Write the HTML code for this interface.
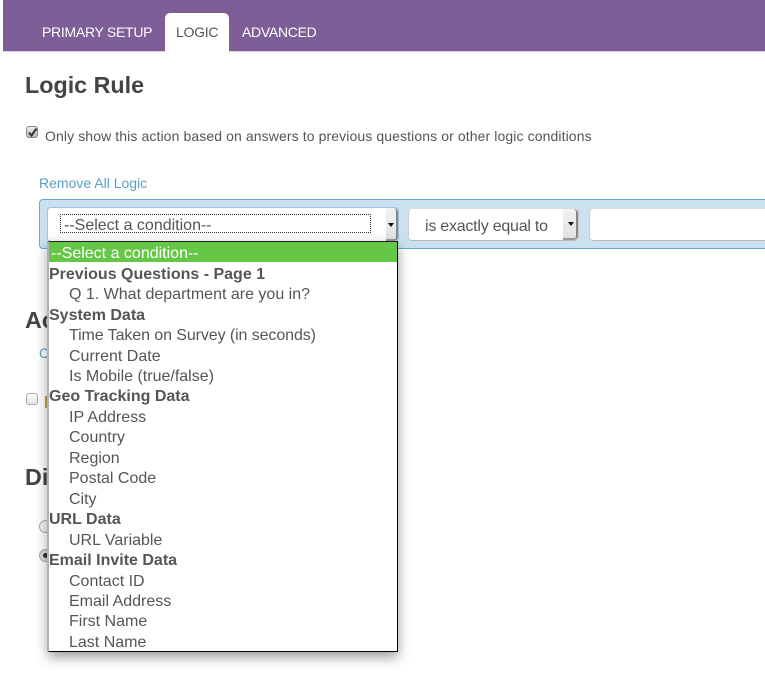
<!DOCTYPE html>
<html>
<head>
<meta charset="utf-8">
<style>
html,body{margin:0;padding:0;background:#fff;}
body{width:765px;height:678px;position:relative;overflow:hidden;font-family:"Liberation Sans",sans-serif;color:#555;}
.a{position:absolute;white-space:nowrap;}
.bar{left:3px;top:0;width:762px;height:51px;background:#7d5e96;border-bottom:1px solid #d9d0e0;box-sizing:content-box;}
.tabt{top:24px;font-size:14px;line-height:17px;color:#fff;letter-spacing:-.28px;}
.tab{left:165px;top:13px;width:64px;height:39px;background:#fff;border-radius:5px 5px 0 0;}
h1{margin:0;font-size:23.3px;line-height:28px;font-weight:bold;color:#444;}
.sel{background:#fff;border-radius:4px;box-sizing:border-box;}
.arrow{position:absolute;width:0;height:0;border-left:3px solid transparent;border-right:3px solid transparent;border-top:4px solid #111;}
.btn{position:absolute;width:12px;top:0;background:linear-gradient(#f2f2f2,#e2e2e2);border-right:2px solid #888;border-bottom:2px solid #999;box-sizing:border-box;border-radius:0 4px 4px 0;}
.list{left:48px;top:241px;width:350px;height:411px;background:#fff;box-sizing:border-box;border-right:1px solid #000;border-bottom:1px solid #000;border-left:1px solid #b2b2b2;border-top:1px solid #222;box-shadow:-1px 0 0 #b2b2b2,0 5px 12px rgba(0,0,0,.4);}
.r{position:absolute;left:0;right:0;height:20.47px;line-height:24.47px;font-size:16px;color:#555;white-space:nowrap;}
.g{font-weight:bold;}
.o{padding-left:20px;}
.hi{background:#66c645;color:#fff;padding-left:2px;left:0;right:0;top:0;}
.cb{width:12px;height:12px;border:1px solid #aaa;border-radius:3px;background:linear-gradient(#fff,#e4e4e4);box-sizing:border-box;}
.rd{width:13px;height:13px;border-radius:50%;border:1px solid #aaa;background:#f4f4f4;box-sizing:border-box;}
</style>
</head>
<body>
<div class="a bar"></div>
<div class="a tab"></div>
<div class="a tabt" style="left:42px;">PRIMARY SETUP</div>
<div class="a tabt" style="left:176px;color:#555;">LOGIC</div>
<div class="a tabt" style="left:242px;">ADVANCED</div>

<h1 class="a" style="left:25px;top:71px;">Logic Rule</h1>

<div class="a cb" style="left:26px;top:126px;background:linear-gradient(#eee,#bbb);border-color:#888;"></div>
<svg class="a" style="left:26px;top:126px;" width="13" height="13" viewBox="0 0 13 13"><path d="M3 6.5 L5.5 9.5 L10.5 2.5" fill="none" stroke="#333" stroke-width="2"/></svg>
<div class="a" style="left:45px;top:128px;font-size:14px;line-height:17px;color:#555;letter-spacing:.104px;">Only show this action based on answers to previous questions or other logic conditions</div>

<div class="a" style="left:39px;top:175px;font-size:14px;line-height:17px;color:#5a9fc6;">Remove All Logic</div>

<div class="a" style="left:39px;top:199px;width:740px;height:50px;background:#cae2ef;border:1px solid #6aa8cf;border-radius:4px;box-sizing:border-box;"></div>

<div class="a sel" style="left:47px;top:207px;width:352px;height:35px;border:1px solid #9cc4e4;">
  <div class="a" style="left:12px;top:6px;width:311px;height:19px;border:1px dotted #333;box-sizing:border-box;"></div>
  <div class="a" style="left:16px;top:7px;font-size:16px;line-height:22px;color:#555;">--Select a condition--</div>
  <div class="btn" style="left:338px;height:33px;"></div>
  <div class="arrow" style="left:340px;top:15px;"></div>
</div>

<div class="a sel" style="left:408px;top:208px;width:171px;height:33px;border:1px solid #ccc;border-top-color:#ddd;border-bottom-color:#bbb;">
  <div class="a" style="left:16px;top:7px;font-size:16px;line-height:21px;color:#555;letter-spacing:-.23px;">is exactly equal to</div>
  <div class="btn" style="left:154px;width:15px;height:31px;"></div>
  <div class="arrow" style="left:159px;top:13px;"></div>
</div>

<div class="a sel" style="left:589px;top:208px;width:190px;height:33px;border:1px solid #ccc;border-top-color:#ddd;border-bottom-color:#bbb;"></div>

<!-- Content behind the dropdown -->
<h1 class="a" style="left:25px;top:306px;">Ac</h1>
<div class="a" style="left:39px;top:345px;font-size:14px;line-height:17px;color:#5a9fc6;">C</div>
<div class="a cb" style="left:26px;top:393px;"></div>
<div class="a" style="left:45px;top:396px;width:2px;height:12px;background:#c9a24a;"></div>
<h1 class="a" style="left:25px;top:463px;">Di</h1>
<div class="a rd" style="left:39px;top:520px;"></div>
<div class="a rd" style="left:39px;top:549px;background:#ddd;"></div>
<div class="a" style="left:43px;top:553px;width:5px;height:5px;border-radius:50%;background:#333;"></div>

<div class="a list">
  <div class="r hi">--Select a condition--</div>
  <div class="r g" style="top:21px;">Previous Questions - Page 1</div>
  <div class="r o" style="top:41px;">Q 1. What department are you in?</div>
  <div class="r g" style="top:62px;">System Data</div>
  <div class="r o" style="top:82px;letter-spacing:-.09px;">Time Taken on Survey (in seconds)</div>
  <div class="r o" style="top:103px;">Current Date</div>
  <div class="r o" style="top:123px;">Is Mobile (true/false)</div>
  <div class="r g" style="top:143px;">Geo Tracking Data</div>
  <div class="r o" style="top:164px;">IP Address</div>
  <div class="r o" style="top:184px;">Country</div>
  <div class="r o" style="top:205px;">Region</div>
  <div class="r o" style="top:225px;">Postal Code</div>
  <div class="r o" style="top:246px;">City</div>
  <div class="r g" style="top:266px;">URL Data</div>
  <div class="r o" style="top:287px;">URL Variable</div>
  <div class="r g" style="top:307px;">Email Invite Data</div>
  <div class="r o" style="top:328px;">Contact ID</div>
  <div class="r o" style="top:348px;">Email Address</div>
  <div class="r o" style="top:368px;">First Name</div>
  <div class="r o" style="top:389px;">Last Name</div>
</div>
</body>
</html>
